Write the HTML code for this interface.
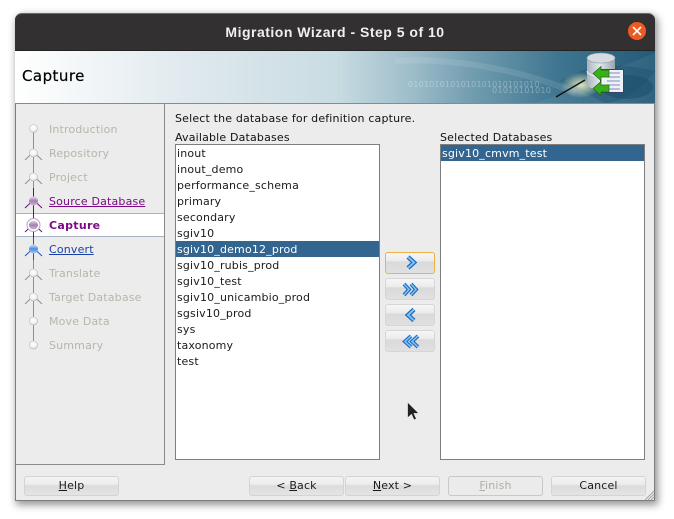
<!DOCTYPE html>
<html><head><meta charset="utf-8"><style>
html,body{margin:0;padding:0;background:#fff}
body{width:674px;height:519px;position:relative;overflow:hidden;font:11px "DejaVu Sans",sans-serif;letter-spacing:.17px;color:#1a1a1a}
div,span.a{position:absolute;box-sizing:border-box;white-space:nowrap}
#win{left:15px;top:13px;width:640px;height:488px;background:#ececec;border-radius:7px 7px 0 0;border:1px solid #7d7d7d;box-shadow:2px 3px 8px 1px rgba(0,0,0,.42)}
#title{left:15px;top:13px;width:640px;height:37px;background:#323031;border-radius:7px 7px 0 0;border-top:1px solid #6a6a6a;color:#f2f0ee;font:bold 14px "Liberation Sans",sans-serif;letter-spacing:.5px;text-align:center;line-height:36px}
#hdr{left:15px;top:50px;width:640px;height:54px;border-top:1px solid #222;border-bottom:1px solid #8a8a8a;background:linear-gradient(90deg,#fff 0,#dfe9ee 27%,#c9dce3 50%,#9dbdca 62%,#6f9bae 72%,#3e7590 85%,#245a78 100%);overflow:hidden}
#cap{left:22px;top:67px;font:15px "DejaVu Sans",sans-serif;letter-spacing:.45px;color:#000;-webkit-text-stroke:.2px #000}
#left{left:16px;top:104px;width:149px;height:361px;border-right:1px solid #8a8a8a;border-bottom:1px solid #8a8a8a;background:#ececec}
.s{left:49px;height:16px;line-height:18px;color:#b8b5ab}
.v{color:#7b0a86;text-decoration:underline}
.b{color:#1b3fa8;text-decoration:underline}
.lab{line-height:14px;color:#111}
.list{top:144px;height:316px;background:#fff;border:1px solid #7e7e7e}
.r{left:0;right:0;height:16px;line-height:18px;padding-left:1px;color:#1a1a1a}
.sel{background:#336591;color:#fff}
.ab{left:385px;width:50px;height:22px;border:1px solid #d6d6d6;border-radius:3px;background:linear-gradient(#f6f6f6 0,#ececec 38%,#dadada 45%,#e0e0e0 100%)}
.ab svg{position:absolute}
.btn{top:476px;width:95px;height:20px;border:1px solid #d4d4d4;border-radius:3px;background:linear-gradient(#f4f4f4 0,#ececec 40%,#dbdbdb 50%,#e4e4e4 100%);text-align:center;line-height:18px;color:#1a1a1a}
u{text-underline-offset:1px}
</style></head><body>
<div id="win"></div>
<div id="title">Migration Wizard - Step 5 of 10</div>
<svg style="position:absolute;left:627px;top:21px" width="20" height="20"><circle cx="10" cy="10" r="9" fill="#ee5a21"/><path d="M6.5 6.5l7 7M13.5 6.5l-7 7" stroke="#fff" stroke-width="1.6" stroke-linecap="round"/></svg>
<div id="hdr">
<svg style="position:absolute;left:0;top:0" width="640" height="52">
<defs><radialGradient id="g1" cx=".5" cy=".5" r=".5"><stop offset="0" stop-color="#eef2c8" stop-opacity=".9"/><stop offset="1" stop-color="#eef2c8" stop-opacity="0"/></radialGradient>
<linearGradient id="gd" x1="0" y1="0" x2="1" y2="0"><stop offset="0" stop-color="#aab4bf"/><stop offset=".45" stop-color="#e3e8ec"/><stop offset="1" stop-color="#98a3b0"/></linearGradient></defs>
<path d="M520 52C560 40 580 25 640 2V52Z" fill="#fff" opacity=".06"/>
<path d="M380 10C450 6 520 24 560 42" stroke="#fff" stroke-opacity=".1" stroke-width="6" fill="none"/>
<path d="M545 30C570 15 600 10 640 20C625 40 610 50 590 52Z" fill="#1a4c66" opacity=".35"/>
<text x="393" y="36" font-family="DejaVu Sans" font-size="8.2" letter-spacing=".05" fill="#fff" fill-opacity=".3">0101010101010101010101010</text>
<text x="477" y="42" font-family="DejaVu Sans" font-size="8.2" fill="#fff" fill-opacity=".3">01010101010</text>
<ellipse cx="612" cy="36" rx="26" ry="12" fill="#1a4c66" opacity=".5"/>
<ellipse cx="566" cy="34" rx="20" ry="13" fill="url(#g1)"/>
<path d="M541 46L570 29" stroke="#111" stroke-width="1.4"/>
<path d="M572 7V32C572 41 600 41 600 32V7Z" fill="url(#gd)"/>
<path d="M572 20C572 27 600 27 600 20" stroke="#f0f3f5" fill="none"/>
<ellipse cx="586" cy="7" rx="14" ry="5" fill="#d5dbe1" stroke="#8e9aa6" stroke-width=".6"/>
<path d="M585.500 18.500H608.500V41.500H585.500Z" fill="#eef0fa" stroke="#3b3f73"/>
<path d="M592 22H605M592 26H605M592 30H605M592 34H605M592 38H605" stroke="#8088b8"/>
<path d="M578 22.500L586 15.500V19H594V26H586V29.500Z" fill="#38b01c" stroke="#1c6a0c" stroke-width=".7"/>
<path d="M578 37.500L586 30.500V34H594V41H586V44.500Z" fill="#38b01c" stroke="#1c6a0c" stroke-width=".7"/>
</svg>
</div>
<div id="cap">Capture</div>

<div id="left"></div>
<div style="left:16px;top:213px;width:148px;height:24px;background:#fff;border-top:1px solid #a8b2c4;border-bottom:1px solid #a8b2c4"></div>
<svg style="position:absolute;left:15px;top:104px" width="40" height="260" fill="none">
<defs>
<radialGradient id="gw" cx=".45" cy=".35" r=".7"><stop offset="0" stop-color="#fff"/><stop offset=".7" stop-color="#f0f0f0"/><stop offset="1" stop-color="#a8a8a8"/></radialGradient>
<linearGradient id="gp" x1="0" y1="0" x2="0" y2="1"><stop offset="0" stop-color="#e8dcec"/><stop offset=".5" stop-color="#a57fb4"/><stop offset="1" stop-color="#cdb8d4"/></linearGradient>
<linearGradient id="gb" x1="0" y1="0" x2="0" y2="1"><stop offset="0" stop-color="#cfe2f8"/><stop offset=".5" stop-color="#4d8fe0"/><stop offset="1" stop-color="#a5c8f0"/></linearGradient>
</defs>
<path d="M18.500 25V84M18.500 156V241" stroke="#8f8f8f"/>
<path d="M18.500 84V133" stroke="#6b0f80"/>
<path d="M18.500 133V156" stroke="#2a4fc0"/>
<g stroke="#8f8f8f"><path d="M10 56L18.500 48L27 56M10 80L18.500 72L27 80M10 176L18.500 168L27 176M10 200L18.500 192L27 200"/></g>
<path d="M10 104L18.500 96L27 104M10 128L18.500 120L27 128" stroke="#6b0f80"/>
<path d="M10 152L18.500 144L27 152" stroke="#2a4fc0"/>
<g fill="url(#gw)" stroke="#b8b8b8" stroke-width=".6"><circle cx="18.500" cy="24.500" r="4"/><circle cx="18.500" cy="49" r="4"/><circle cx="18.500" cy="73" r="4"/><circle cx="18.500" cy="169" r="4"/><circle cx="18.500" cy="193" r="4"/><circle cx="18.500" cy="217" r="4"/><circle cx="18.500" cy="241" r="4"/></g>
<circle cx="18.500" cy="97" r="4.500" fill="url(#gp)"/>
<circle cx="18.500" cy="121" r="6.500" fill="#fff" stroke="#b9a3c2"/><circle cx="18.500" cy="121" r="4.500" fill="url(#gp)"/>
<circle cx="18.500" cy="145" r="4.500" fill="url(#gb)"/>
</svg>
<div class="s" style="top:121px">Introduction</div>
<div class="s" style="top:145px">Repository</div>
<div class="s" style="top:169px">Project</div>
<div class="s v" style="top:193px">Source Database</div>
<div class="s" style="top:217px;color:#7b0a86;font-weight:bold;letter-spacing:.3px">Capture</div>
<div class="s b" style="top:241px">Convert</div>
<div class="s" style="top:265px">Translate</div>
<div class="s" style="top:289px">Target Database</div>
<div class="s" style="top:313px">Move Data</div>
<div class="s" style="top:337px">Summary</div>

<div class="lab" style="left:175px;top:112px">Select the database for definition capture.</div>
<div class="lab" style="left:175px;top:131px">Available Databases</div>
<div class="lab" style="left:440px;top:131px">Selected Databases</div>
<div class="list" style="left:175px;width:205px">
<div class="r" style="top:0">inout</div>
<div class="r" style="top:16px">inout_demo</div>
<div class="r" style="top:32px">performance_schema</div>
<div class="r" style="top:48px">primary</div>
<div class="r" style="top:64px">secondary</div>
<div class="r" style="top:80px">sgiv10</div>
<div class="r sel" style="top:96px">sgiv10_demo12_prod</div>
<div class="r" style="top:112px">sgiv10_rubis_prod</div>
<div class="r" style="top:128px">sgiv10_test</div>
<div class="r" style="top:144px">sgiv10_unicambio_prod</div>
<div class="r" style="top:160px">sgsiv10_prod</div>
<div class="r" style="top:176px">sys</div>
<div class="r" style="top:192px">taxonomy</div>
<div class="r" style="top:208px">test</div>
</div>
<div class="list" style="left:440px;width:205px">
<div class="r sel" style="top:0">sgiv10_cmvm_test</div>
</div>

<div class="ab" style="top:252px;border-color:#efb04a"><svg style="left:18px;top:1px" width="14" height="16"><path d="M4 3L10 8.500L4 14" fill="none" stroke="#1c66c0" stroke-width="4.400"/><path d="M4 3L10 8.500L4 14" fill="none" stroke="#7cc2f4" stroke-width="2"/></svg></div>
<div class="ab" style="top:278px"><svg style="left:15px;top:1px" width="20" height="18"><path d="M3 4L8 9.500L3 15M10 4L15 9.500L10 15" fill="none" stroke="#1c66c0" stroke-width="3.800"/><path d="M3 4L8 9.500L3 15M10 4L15 9.500L10 15" fill="none" stroke="#7cc2f4" stroke-width="1.600"/></svg></div>
<div class="ab" style="top:304px"><svg style="left:18px;top:1px" width="14" height="18"><path d="M10 3.500L4 9L10 14.500" fill="none" stroke="#1c66c0" stroke-width="4.400"/><path d="M10 3.500L4 9L10 14.500" fill="none" stroke="#7cc2f4" stroke-width="2"/></svg></div>
<div class="ab" style="top:330px"><svg style="left:15px;top:1px" width="20" height="18"><path d="M10 4L4 9.500L10 15M17 4L11 9.500L17 15" fill="none" stroke="#1c66c0" stroke-width="3.800"/><path d="M10 4L4 9.500L10 15M17 4L11 9.500L17 15" fill="none" stroke="#7cc2f4" stroke-width="1.600"/></svg></div>

<svg style="position:absolute;left:404px;top:399px" width="18" height="24"><path d="M3.500 3V19L7.500 15.500L10 21L12.500 20L10 14.500H15Z" fill="#222" stroke="#eee" stroke-width=".7"/></svg>

<div class="btn" style="left:24px"><u>H</u>elp</div>
<div class="btn" style="left:249px">&lt; <u>B</u>ack</div>
<div class="btn" style="left:345px"><u>N</u>ext &gt;</div>
<div class="btn" style="left:448px;background:#ebebeb;border-color:#c8c8c8;color:#b0aea6"><u>F</u>inish</div>
<div class="btn" style="left:551px">Cancel</div>
<svg style="position:absolute;left:644px;top:490px" width="11" height="11"><path d="M10 1L1 10M10 4L4 10M10 7L7 10" stroke="#a4a4a4"/></svg>
</body></html>
